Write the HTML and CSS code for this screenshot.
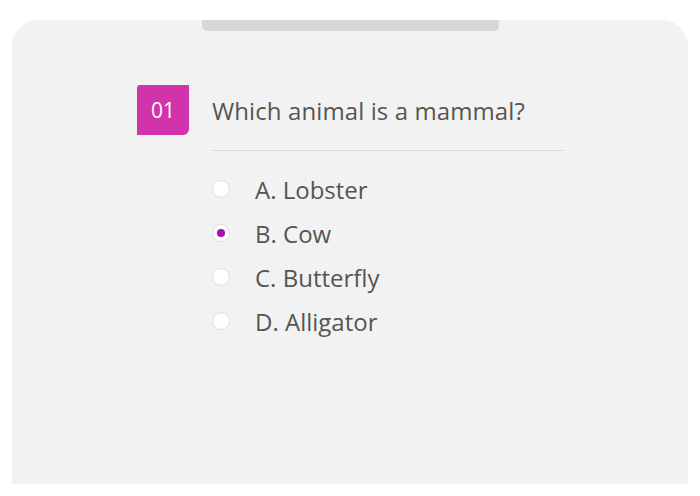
FILE: index.html
```html
<!DOCTYPE html>
<html>
<head>
<meta charset="utf-8">
<link rel="stylesheet" href="styles.css">
</head>
<body>
<div class="card">
  <div class="tab"></div>
  <div class="quiz">
    <div class="badge">01</div>
    <div class="body">
      <div class="question">Which animal is a mammal?</div>
      <div class="options">
        <label class="option"><span class="radio"></span><span class="text">A. Lobster</span></label>
        <label class="option"><span class="radio checked"></span><span class="text">B. Cow</span></label>
        <label class="option"><span class="radio"></span><span class="text">C. Butterfly</span></label>
        <label class="option"><span class="radio"></span><span class="text">D. Alligator</span></label>
      </div>
    </div>
  </div>
</div>
</body>
</html>
```
FILE: styles.css
```css
html, body {
  margin: 0;
  padding: 0;
  background: #ffffff;
}
body {
  padding: 20px 12px 12px 12px;
  font-family: "Open Sans", "Liberation Sans", sans-serif;
}
.card {
  height: 464px;
  background: #f2f2f2;
  border-radius: 26px 26px 0 0;
  display: flex;
  flex-direction: column;
  align-items: flex-start;
  box-sizing: border-box;
}
.tab {
  margin-left: 190px;
  width: 297px;
  height: 11px;
  background: #d7d7d7;
  border-radius: 0 0 5px 5px;
}
.quiz {
  margin-top: 54px;
  margin-left: 125px;
  display: flex;
  gap: 23px;
}
.badge {
  width: 52px;
  height: 50px;
  background: #d133aa;
  color: #ffffff;
  font-size: 21px;
  display: flex;
  align-items: center;
  justify-content: center;
  border-radius: 3px 0 6px 0;
}
.body {
  width: 352px;
}
.question {
  font-size: 24px;
  letter-spacing: 0.1px;
  color: #555555;
  line-height: 30px;
  padding-top: 11px;
  padding-bottom: 24px;
  border-bottom: 1px solid #dcdcdc;
}
.options {
  display: flex;
  flex-direction: column;
  padding-top: 24px;
  gap: 14px;
}
.option {
  display: flex;
  align-items: center;
  gap: 25px;
  height: 30px;
}
.radio {
  width: 16px;
  height: 16px;
  border-radius: 50%;
  background: #ffffff;
  border: 1px solid #dddddd;
  box-sizing: content-box;
  display: flex;
  align-items: center;
  justify-content: center;
  margin-top: -2px;
}
.radio.checked::after {
  content: "";
  width: 8px;
  height: 8px;
  border-radius: 50%;
  background: #a30fb3;
}
.text {
  font-size: 24px;
  color: #555555;
  line-height: 30px;
}
```
